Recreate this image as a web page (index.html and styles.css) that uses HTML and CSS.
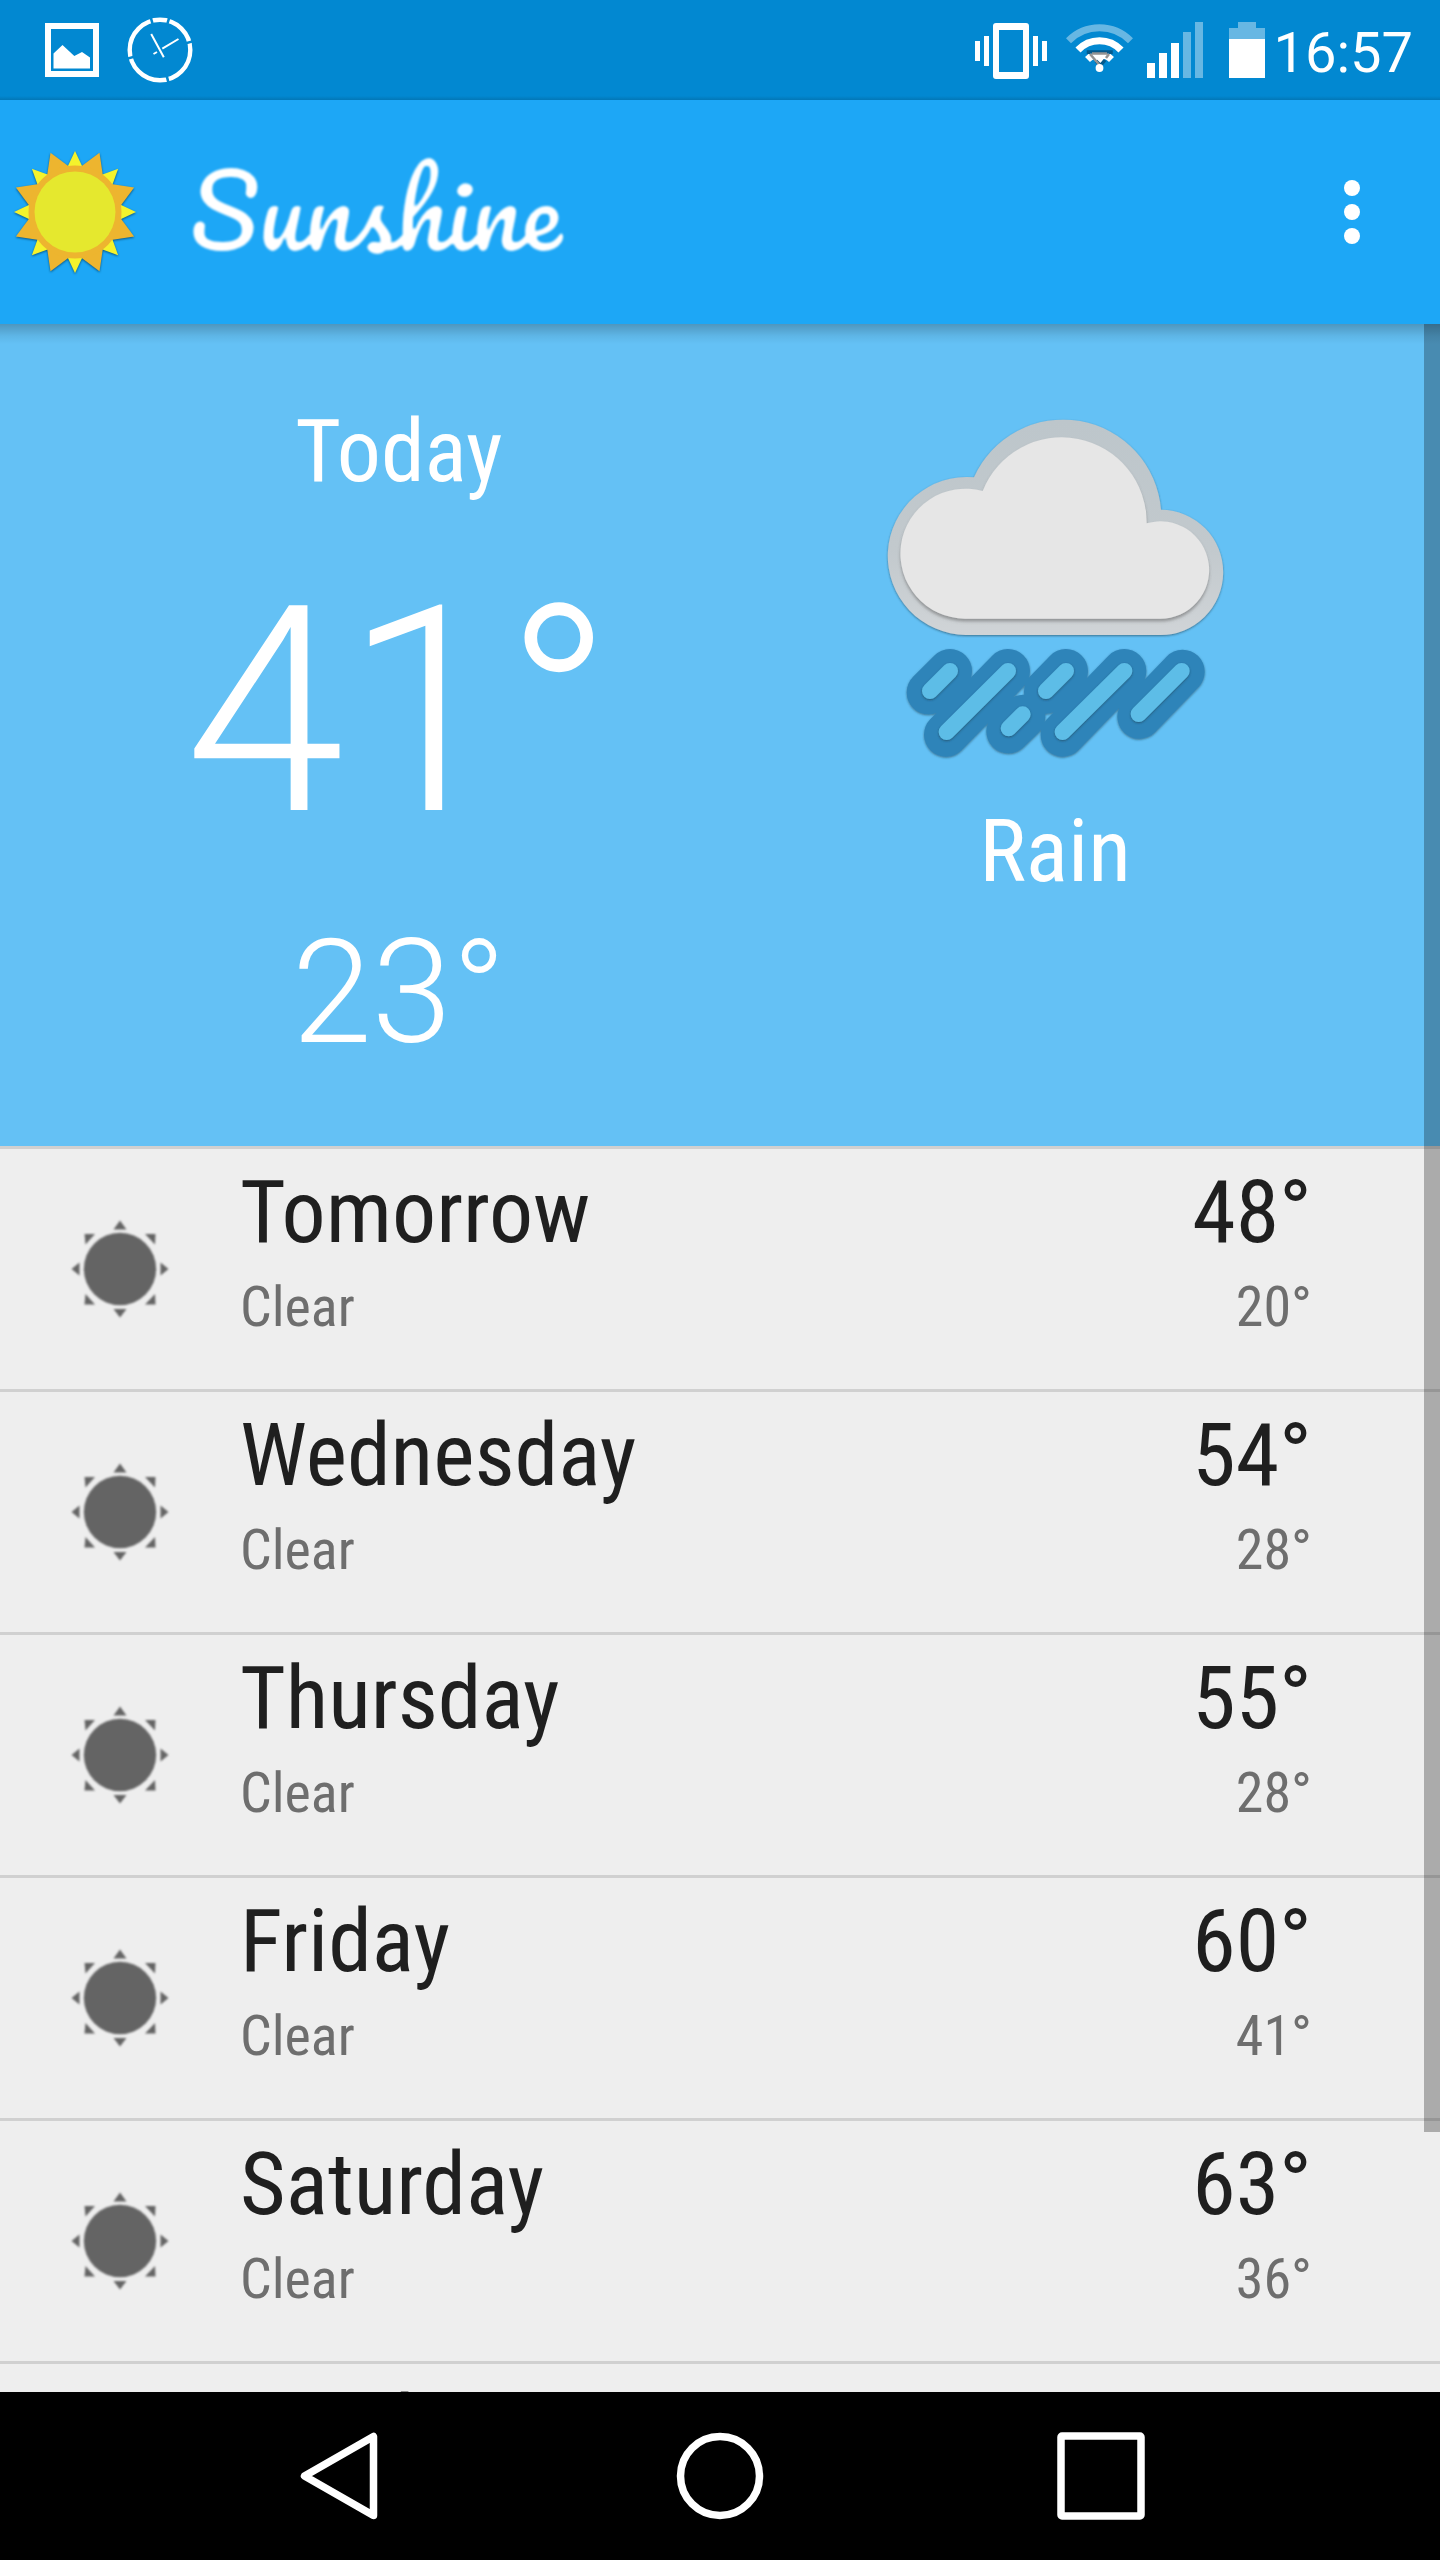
FILE: index.html
```html
<!DOCTYPE html>
<html lang="en">
<head>
<meta charset="utf-8">
<title>Sunshine</title>
<link rel="stylesheet" href="styles.css">
</head>
<body>
<svg class="defs" width="0" height="0" aria-hidden="true">
  <filter id="slim" x="0" y="0" width="100%" height="100%"><feMorphology operator="erode" radius="1"/><feGaussianBlur stdDeviation=".8"/></filter>
  <symbol id="clear" viewBox="0 0 100 100">
    <circle cx="50" cy="49" r="36.2"/>
    <path d="M50 0.5 L56.5 9.5 H43.5 Z"/>
    <path d="M50 97.500 L56.500 89 H43.500 Z"/>
    <path d="M1.500 49 L9.500 42.500 V55.500 Z"/>
    <path d="M98.500 49 L90.500 42.500 V55.500 Z"/>
    <path d="M14.500 14 H25 L15.500 24.500 Z"/>
    <path d="M85.500 14 H75 L85 24.500 Z"/>
    <path d="M14.500 84.500 H25 L15.500 74 Z"/>
    <path d="M85.500 84.500 H75 L85 74 Z"/>
  </symbol>
</svg>
<div class="screen">
  <header class="status">
    <div class="status-left">
      <svg width="54" height="100" viewBox="45 0 54 100"><rect x="48" y="26" width="48" height="48" fill="none" stroke="#fff" stroke-width="6"/><path d="M53.500 53.500 L62.500 45 L74.300 56 L82 52 L90 57.500 V68.500 H53.500 Z" fill="#fff"/></svg>
      <svg width="66" height="100" viewBox="127 0 66 100"><circle cx="160" cy="50" r="30.300" fill="none" stroke="#fff" stroke-width="4.400"/><g stroke="#0288d1" stroke-width="2.600"><path d="M150.300 16 L152.900 25 M169.700 16 L167 25 M194 41 L184 43.700 M126 59 L136 56.300 M168.800 84 L166.500 75"/></g><path d="M151.200 34 L163.800 57.300 M178.500 39 L162.300 48.700 M153.500 54 L157 52" stroke="#fff" stroke-width="2"/></svg>
    </div>
    <div class="status-right">
      <svg width="72" height="100" viewBox="975 0 72 100" fill="#fff"><path d="M975 41h5v20h-5zM984 36h5v30h-5zM1033 36h5v30h-5zM1042 41h5v20h-5z"/><path fill-rule="evenodd" d="M996 23h30a3 3 0 0 1 3 3v50a3 3 0 0 1-3 3h-30a3 3 0 0 1-3-3V26a3 3 0 0 1 3-3zM999 30v42h24V30z"/></svg>
      <svg class="wifi" width="67" height="100" viewBox="1066 0 67 100" fill="none"><path d="M1068.500 40.700 A43.500 43.500 0 0 1 1130.500 40.700" stroke="#67b7e3" stroke-width="7"/><path d="M1078 50 A29.500 29.500 0 0 1 1121 50" stroke="#fff" stroke-width="7"/><path d="M1087.500 59.500 A17 17 0 0 1 1111.500 59.500" stroke="#fff" stroke-width="7"/><path d="M1090.500 52.500 H1109.500 L1099.500 65.500 Z" fill="#fff"/><path d="M1088.500 54 V52 H1111 V54 M1105 60 L1100.500 65.500 L1096 61" stroke="#045a8d" stroke-width="3.500"/><path d="M1090 54 L1099.500 65 M1109 54 L1106 58 M1092 53.500 H1107" stroke="#939393" stroke-width="2.500"/><circle cx="1099.500" cy="68" r="3.900" fill="#fff"/></svg>
      <svg class="signal" width="56" height="100" viewBox="1147 0 56 100"><path fill="#fff" d="M1147 63h8v15h-8zM1159 53h8v25h-8zM1171 43h8v35h-8z"/><path fill="#67b7e3" d="M1183 32h8v46h-8zM1195 22h8v56h-8z"/></svg>
      <svg class="battery" width="36" height="100" viewBox="1229 0 36 100"><path fill="#67b7e3" d="M1238 22h18v6h9v11h-36V28h9z"/><path fill="#fff" d="M1229 39h36v39h-36z"/></svg>
      <span class="time">16:57</span>
    </div>
  </header>

  <div class="appbar">
    <svg class="logo" width="140" height="140" viewBox="-70 -70 140 140">
      <g fill="#f4f32c">
        <path d="M0 -61 L8 -44 H-8 Z"/><path transform="rotate(45)" d="M0 -61 L8 -44 H-8 Z"/><path transform="rotate(90)" d="M0 -61 L8 -44 H-8 Z"/><path transform="rotate(135)" d="M0 -61 L8 -44 H-8 Z"/><path transform="rotate(180)" d="M0 -61 L8 -44 H-8 Z"/><path transform="rotate(225)" d="M0 -61 L8 -44 H-8 Z"/><path transform="rotate(270)" d="M0 -61 L8 -44 H-8 Z"/><path transform="rotate(315)" d="M0 -61 L8 -44 H-8 Z"/>
      </g>
      <g fill="#edb52f">
        <path transform="rotate(22.500)" d="M0 -64 L12 -44 H-12 Z"/><path transform="rotate(67.500)" d="M0 -64 L12 -44 H-12 Z"/><path transform="rotate(112.500)" d="M0 -64 L12 -44 H-12 Z"/><path transform="rotate(157.500)" d="M0 -64 L12 -44 H-12 Z"/><path transform="rotate(202.500)" d="M0 -64 L12 -44 H-12 Z"/><path transform="rotate(247.500)" d="M0 -64 L12 -44 H-12 Z"/><path transform="rotate(292.500)" d="M0 -64 L12 -44 H-12 Z"/><path transform="rotate(337.500)" d="M0 -64 L12 -44 H-12 Z"/>
        <circle r="46.500"/>
      </g>
      <circle r="40.500" fill="#e5e82e"/>
    </svg>
    <h1 class="brand">Sunshine</h1>
    <svg class="more" width="16" height="64" viewBox="0 0 16 64" fill="#fff"><circle cx="8" cy="8" r="8"/><circle cx="8" cy="32" r="8"/><circle cx="8" cy="56" r="8"/></svg>
  </div>

  <main class="content">
    <section class="today">
      <div class="today-col temps">
        <div class="label">Today</div>
        <div class="high">41°</div>
        <div class="low">23°</div>
      </div>
      <div class="today-col sky">
        <svg width="350" height="350" viewBox="60 69 1050 1050">
          <defs>
            <linearGradient id="rim" x1="0" y1="0" x2="0" y2="1"><stop offset="0" stop-color="#bdc6cb"/><stop offset=".6" stop-color="#c2c9cd"/><stop offset="1" stop-color="#d0d4d7"/></linearGradient>
            <filter id="edge" filterUnits="userSpaceOnUse" x="60" y="69" width="1050" height="1050"><feDropShadow dx="0" dy="3" stdDeviation="3" flood-color="#1a3a4c" flood-opacity=".6"/></filter>
            <filter id="inset" filterUnits="userSpaceOnUse" x="60" y="69" width="1050" height="1050"><feDropShadow dx="0" dy="8" stdDeviation="5" flood-color="#555" flood-opacity=".5"/></filter>
          </defs>
          <path filter="url(#edge)" fill="url(#rim)" d="M318 735 A237 237 0 1 1 342 262 A294 294 0 0 1 903 359 A188 188 0 0 1 900 735 Z"/>
          <path filter="url(#inset)" fill="#e6e6e6" d="M315 686 A195 195 0 1 1 368 303 A255 255 0 0 1 860 400 A146 146 0 1 1 900 686 Z"/>
          <path filter="url(#edge)" fill="none" stroke="#2f84b9" stroke-width="132" stroke-linecap="round" d="M270 843 L206 907 M444 843 L258 1034 M618 843 L558 905 M793 843 L608 1034 M968 845 L838 980 M490 980 L445 1024"/>
          <path filter="url(#edge)" fill="none" stroke="#5dbde7" stroke-width="48" stroke-linecap="round" d="M270 843 L210 903 M444 843 L260 1026 M618 843 L558 903 M793 843 L608 1026 M965 843 L836 972 M488 973 L446 1015"/>
        </svg>
        <div class="label">Rain</div>
      </div>
    </section>

    <ul class="days">
      <li class="day"><svg class="icon"><use href="#clear"/></svg><div class="what"><div class="name">Tomorrow</div><div class="sub">Clear</div></div><div class="deg"><div class="name">48°</div><div class="sub">20°</div></div></li>
      <li class="day"><svg class="icon"><use href="#clear"/></svg><div class="what"><div class="name">Wednesday</div><div class="sub">Clear</div></div><div class="deg"><div class="name">54°</div><div class="sub">28°</div></div></li>
      <li class="day"><svg class="icon"><use href="#clear"/></svg><div class="what"><div class="name">Thursday</div><div class="sub">Clear</div></div><div class="deg"><div class="name">55°</div><div class="sub">28°</div></div></li>
      <li class="day"><svg class="icon"><use href="#clear"/></svg><div class="what"><div class="name">Friday</div><div class="sub">Clear</div></div><div class="deg"><div class="name">60°</div><div class="sub">41°</div></div></li>
      <li class="day"><svg class="icon"><use href="#clear"/></svg><div class="what"><div class="name">Saturday</div><div class="sub">Clear</div></div><div class="deg"><div class="name">63°</div><div class="sub">36°</div></div></li>
      <li class="day"><div class="icon"></div><div class="what"><div class="name">Sunday</div></div></li>
    </ul>
    <div class="scrollbar"></div>
  </main>

  <nav class="nav">
    <svg width="88" height="88" viewBox="0 0 88 88"><path d="M9.500 44 L78.500 4.500 V83.500 Z"/></svg>
    <svg width="88" height="88" viewBox="0 0 88 88"><circle cx="44" cy="44" r="39.500"/></svg>
    <svg width="88" height="88" viewBox="0 0 88 88"><rect x="4" y="4" width="80" height="80" rx="1"/></svg>
  </nav>
</div>
</body>
</html>
```
FILE: styles.css
```css
* { box-sizing: border-box; margin: 0; padding: 0; }

body { background: #000; font-family: Roboto, sans-serif; }

svg { display: block; flex: none; }

.defs { position: absolute; }

.screen {
  width: 1440px;
  height: 2560px;
  display: flex;
  flex-direction: column;
  overflow: hidden;
}

/* status bar */
.status {
  flex: none;
  height: 100px;
  display: flex;
  justify-content: space-between;
  padding: 0 27px 0 45px;
  background: linear-gradient(#0288d1 96px, #0277b7 100px);
}

.status-left { display: flex; gap: 28px; }

.status-right { display: flex; }

.wifi { margin-left: 19px; }
.signal { margin-left: 14px; }
.battery { margin-left: 26px; }

.time {
  width: 148px;
  padding-top: 3px;
  color: #fff;
  font-size: 56px;
  line-height: 100px;
  text-align: right;
}

/* app bar */
.appbar {
  flex: none;
  position: relative;
  z-index: 2;
  height: 224px;
  display: flex;
  align-items: center;
  padding: 0 80px 0 5px;
  background: #1da7f6;
}

.appbar::after {
  content: "";
  position: absolute;
  left: 0;
  right: 0;
  top: 100%;
  height: 20px;
  background: linear-gradient(rgba(0, 0, 0, .22), rgba(0, 0, 0, .06) 60%, transparent);
}

.logo { filter: drop-shadow(0 1px 1px rgba(0, 50, 80, .7)); }

.brand {
  flex: 1;
  padding: 0 0 5px 44px;
  color: #fff;
  font-family: Pacifico, cursive;
  font-size: 100px;
  font-weight: 400;
  line-height: 176px;
  filter: url(#slim);
}

/* today */
.content {
  position: relative;
  flex: 1;
  min-height: 0;
  overflow: hidden;
  background: #eee;
}

.today {
  height: 822px;
  display: grid;
  grid-template-columns: 656px 656px;
  padding-left: 71px;
  background: #64c1f5;
  color: #fff;
  text-align: center;
}

.today-col { display: flex; flex-direction: column; align-items: center; }

.temps { padding-top: 75px; }

.sky { padding-top: 89px; }

.label { font-family: "Roboto Condensed", Roboto, sans-serif; font-size: 88px; line-height: 104px; }

.high { margin-top: 40px; font-size: 288px; font-weight: 300; line-height: 338px; }

.low { margin-top: 28px; font-size: 144px; font-weight: 300; line-height: 168px; }

.sky .label { margin-top: 36px; }

/* forecast list */
.days { list-style: none; font-family: "Roboto Condensed", Roboto, sans-serif; }

.day {
  height: 243px;
  display: flex;
  padding: 11px 128px 0 70px;
  border-top: 3px solid #d0d0d0;
  color: #1f1f1f;
}

.icon { width: 100px; height: 100px; margin-top: 60px; fill: #646464; filter: blur(1px); }

.what { flex: 1; padding-left: 70px; }

.deg { text-align: right; }

.name { font-size: 88px; line-height: 104px; }

.sub { margin-top: 10px; color: #6e6e6e; font-size: 56px; line-height: 66px; }

.scrollbar {
  position: absolute;
  top: 0;
  right: 0;
  width: 16px;
  height: 1808px;
  background: rgba(0, 0, 0, .28);
}

/* navigation bar */
.nav {
  flex: none;
  height: 168px;
  display: flex;
  justify-content: center;
  align-items: center;
  gap: 293px;
  background: #000;
}

.nav svg { fill: none; stroke: #fff; stroke-width: 7.500px; stroke-linejoin: round; }
```
